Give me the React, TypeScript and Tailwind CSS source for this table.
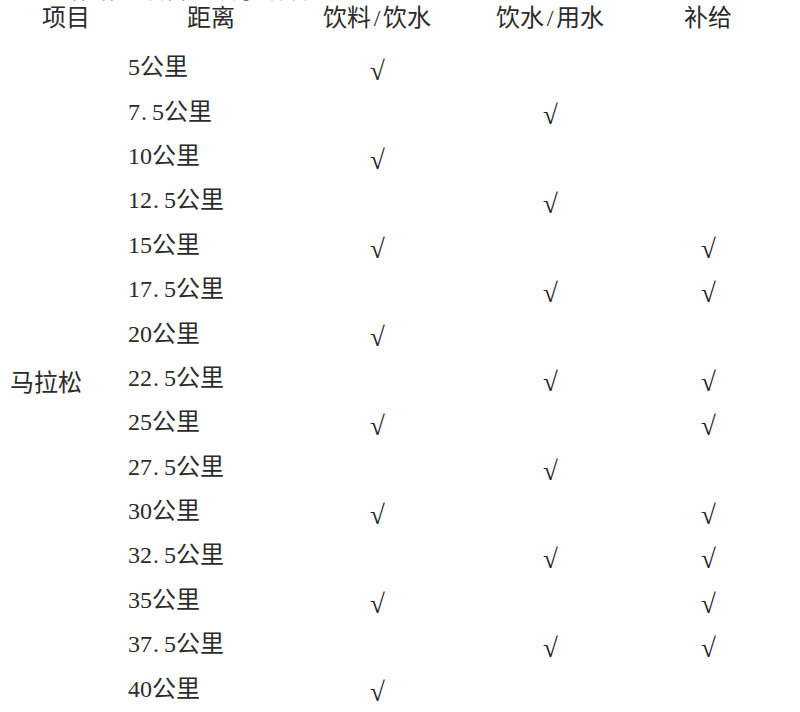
import React from "react";

type Row = { d: string; a: boolean; b: boolean; c: boolean };

const rows: Row[] = [
  { d: "5", a: true, b: false, c: false },
  { d: "7.5", a: false, b: true, c: false },
  { d: "10", a: true, b: false, c: false },
  { d: "12.5", a: false, b: true, c: false },
  { d: "15", a: true, b: false, c: true },
  { d: "17.5", a: false, b: true, c: true },
  { d: "20", a: true, b: false, c: false },
  { d: "22.5", a: false, b: true, c: true },
  { d: "25", a: true, b: false, c: true },
  { d: "27.5", a: false, b: true, c: false },
  { d: "30", a: true, b: false, c: true },
  { d: "32.5", a: false, b: true, c: true },
  { d: "35", a: true, b: false, c: true },
  { d: "37.5", a: false, b: true, c: true },
  { d: "40", a: true, b: false, c: false },
];

function Half({ s }: { s: string }) {
  return (
    <>
      {s.split("").map((ch, i) => (
        <span
          key={i}
          className={
            ch === "."
              ? "inline-block w-[12px] text-left pl-[1px]"
              : "inline-block w-[12px] text-center"
          }
        >
          {ch}
        </span>
      ))}
    </>
  );
}

function Check({ on }: { on: boolean }) {
  return (
    <div className="flex justify-center pt-[13px]">
      {on ? (
        <span className="font-['Liberation_Serif','Noto_Sans_CJK_SC',serif] font-bold text-[27px] leading-[26px] text-[#222] pl-[1px]">
          √
        </span>
      ) : null}
    </div>
  );
}

export default function App() {
  return (
    <div className="w-[800px] h-[712px] overflow-hidden bg-white text-[#2b2b2b] font-['Liberation_Serif','Noto_Sans_CJK_SC',serif] text-[24px]">
      <div className="h-[3px] overflow-hidden">
        <div className="mt-[-22px] pl-[20px] leading-[24px] whitespace-nowrap text-[#555]">
          二、补给、饮料、饮水站设置
        </div>
      </div>
      <div className="h-[42px] pt-[3px] flex leading-[24px]">
        <div className="w-[132px] text-center">项目</div>
        <div className="w-[158px] text-center">距离</div>
        <div className="w-[174px] text-center">
          饮料<span className="inline-block w-[12px] text-center">/</span>饮水
        </div>
        <div className="w-[172px] text-center">
          饮水<span className="inline-block w-[12px] text-center">/</span>用水
        </div>
        <div className="w-[144px] text-center">补给</div>
      </div>
      <div className="flex">
        <div className="w-[128px] flex items-center pl-[10px] pt-[10px]">
          马拉松
        </div>
        <div className="flex flex-col">
          {rows.map((r, i) => (
            <div key={i} className="h-[44.4px] grid grid-cols-[162px_174px_172px_144px]">
              <div className="flex items-center leading-[24px] whitespace-nowrap">
                <Half s={r.d} />
                公里
              </div>
              <Check on={r.a} />
              <Check on={r.b} />
              <Check on={r.c} />
            </div>
          ))}
        </div>
      </div>
    </div>
  );
}
